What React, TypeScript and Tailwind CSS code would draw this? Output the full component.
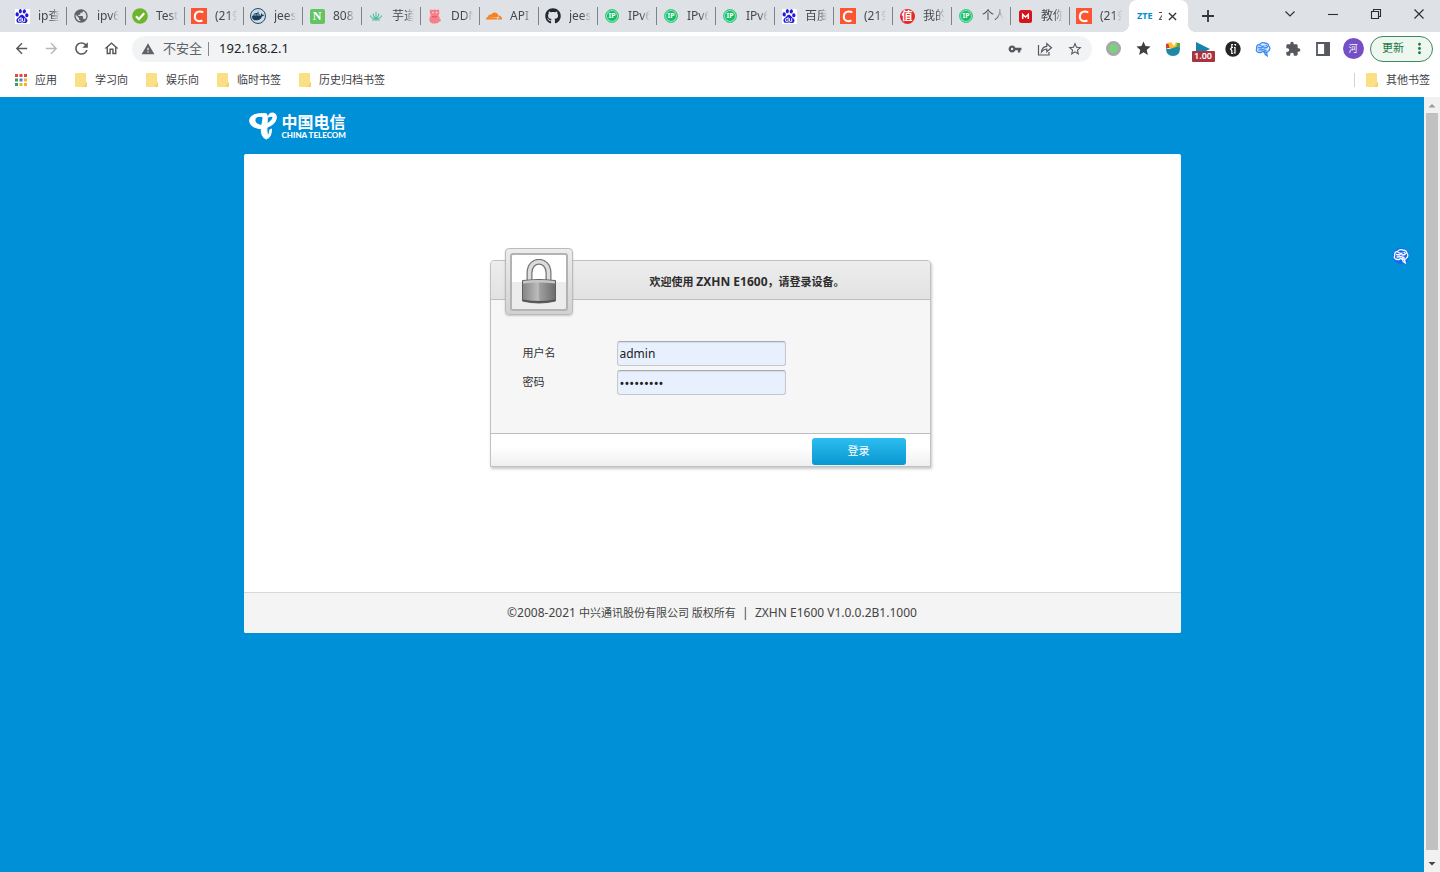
import type { ReactNode } from "react";
import { SiBaidu, SiCloudflare, SiDocker } from "react-icons/si";
import { FaGithub } from "react-icons/fa";
import {
  MdArrowBack,
  MdArrowForward,
  MdExtension,
  MdMoreVert,
  MdPublic,
  MdRefresh,
  MdStar,
  MdStarBorder,
  MdVpnKey,
  MdWarning,
  MdOutlineHome,
} from "react-icons/md";

type TabKind =
  | "baidu" | "globe" | "check" | "csdn" | "docker" | "n" | "lotus"
  | "bear" | "cloud" | "github" | "ip" | "zhi" | "m";

const tabs: { kind: TabKind; title: string }[] = [
  { kind: "baidu", title: "ip查询" },
  { kind: "globe", title: "ipv6" },
  { kind: "check", title: "Test" },
  { kind: "csdn", title: "(21条" },
  { kind: "docker", title: "jees" },
  { kind: "n", title: "808" },
  { kind: "lotus", title: "芋道" },
  { kind: "bear", title: "DDNS" },
  { kind: "cloud", title: "API" },
  { kind: "github", title: "jees" },
  { kind: "ip", title: "IPv6" },
  { kind: "ip", title: "IPv6" },
  { kind: "ip", title: "IPv6" },
  { kind: "baidu", title: "百度" },
  { kind: "csdn", title: "(21条" },
  { kind: "zhi", title: "我的" },
  { kind: "ip", title: "个人" },
  { kind: "m", title: "教你" },
  { kind: "csdn", title: "(21条" },
];

function Favicon({ kind }: { kind: TabKind }) {
  switch (kind) {
    case "baidu":
      return (
        <span className="flex size-[15px] items-center justify-center bg-white">
          <SiBaidu className="size-[14px] text-[#2319dc]" />
        </span>
      );
    case "globe":
      return (
        <span className="flex size-[14px] items-center justify-center rounded-full bg-[#dee1e6]">
          <MdPublic className="size-4 shrink-0 text-[#5f6368]" />
        </span>
      );
    case "check":
      return (
        <svg viewBox="0 0 16 16" className="size-4">
          <circle cx="8" cy="8" r="7.8" fill="#6cb52d" />
          <path d="M4 8.2l2.9 3 5.3-6" fill="none" stroke="#fff" strokeWidth="2.2" />
        </svg>
      );
    case "csdn":
      return (
        <svg viewBox="0 0 16 16" className="size-4">
          <path d="M0 0h16v16H0z" fill="#fc5531" />
          <path d="M12.3 4.3C8.4 2.3 4 3.8 3.8 8.4c-.2 4.2 3.7 5.7 7.6 4.1" fill="none" stroke="#fff" strokeWidth="2" />
        </svg>
      );
    case "docker":
      return (
        <span className="flex size-4 items-center justify-center rounded-full border border-[#274863] bg-[#c9dcea]">
          <SiDocker className="size-3 text-[#1d3d57]" />
        </span>
      );
    case "n":
      return (
        <span className="flex size-[15px] items-center justify-center rounded-[2px] bg-[#62c462] font-['Liberation_Serif',serif] text-[12px] font-bold text-white">
          N
        </span>
      );
    case "lotus":
      return (
        <svg viewBox="0 0 14 14" className="size-[14px]" fill="none" stroke="#55bd9c" strokeWidth="1.1">
          <path d="M7 10V2.8M7 10C5 8.5 4.2 6.5 4 4.5M7 10c2-1.500 2.800-3.500 3-5.500M7 10C4.500 10 2.500 8.700 1 6.500M7 10c2.500 0 4.500-1.300 6-3.500M3 11h8" />
        </svg>
      );
    case "bear":
      return (
        <svg viewBox="0 0 14 16" className="h-4 w-[14px]">
          <path d="M2 1.500l2 .6q3-1 5 0l2-.8.300 4-.7 2.200q1.400 1.700 1 3.500l1.400.8q.3 2-1.700 1.800Q10.500 15.500 7 15.500q-5.500 0-5.600-3.600Q1.300 9 2.800 7.400 1 4.500 2 1.500z" fill="#f77f87" />
          <circle cx="5" cy="4.500" r=".7" fill="#fff" />
          <circle cx="8.500" cy="4.500" r=".7" fill="#fff" />
          <path d="M4 8.500q2.500 1 5 0" stroke="#d9525f" fill="none" />
        </svg>
      );
    case "cloud":
      return <SiCloudflare className="size-4 text-[#f6821f]" />;
    case "github":
      return <FaGithub className="size-4 text-[#24292f]" />;
    case "ip":
      return (
        <span className="flex size-[14px] items-center justify-center rounded-full border border-[#3ecf85] bg-[#12bf67] text-[7px] font-bold text-white ring-1 ring-[#a3dfc1] ring-inset">
          IP
        </span>
      );
    case "zhi":
      return (
        <span className="flex size-[15px] items-center justify-center rounded-full bg-[#e62828] text-[11px] font-bold text-white">
          值
        </span>
      );
    case "m":
      return (
        <svg viewBox="0 0 13 13" className="size-[13px]">
          <rect width="13" height="13" rx="2.500" fill="#d9131c" />
          <path d="M3.700 9V4.500L6.500 7l2.800-2.500V9" fill="none" stroke="#fff" strokeWidth="1.500" />
        </svg>
      );
  }
}

function TabStrip() {
  return (
    <div className="flex h-8 bg-[#dee1e6] pl-2">
      <div role="tablist" className="grid min-w-0 flex-1 auto-cols-fr grid-flow-col">
        {tabs.map((tab, i) => (
          <button
            key={i}
            role="tab"
            aria-selected={false}
            className="flex min-w-0 items-center pl-[6px]"
          >
            <span className="flex w-4 shrink-0 justify-center">
              <Favicon kind={tab.kind} />
            </span>
            <span className="ml-2 w-[22px] overflow-hidden text-left text-[12px] whitespace-nowrap text-[#45494d] [mask-image:linear-gradient(to_right,black_60%,transparent)]">
              {tab.title}
            </span>
            {i < tabs.length - 1 && <span className="ml-auto h-[18px] w-px bg-[#808388]" />}
          </button>
        ))}
        <div className="relative flex min-w-0 items-center rounded-t-lg bg-white">
          <span className="absolute bottom-0 -left-2 size-2 bg-[radial-gradient(circle_at_0_0,transparent_8px,white_8px)]" />
          <span className="absolute -right-2 bottom-0 size-2 bg-[radial-gradient(circle_at_100%_0,transparent_8px,white_8px)]" />
          <button role="tab" aria-selected className="flex items-center pl-2">
            <span className="text-[9px] font-bold text-[#008ed3]">ZTE</span>
            <span className="ml-[6px] w-1 overflow-hidden text-[11px] text-[#45494d]">Z</span>
          </button>
          <button aria-label="关闭标签页" className="ml-auto mr-[11px]">
            <svg viewBox="0 0 10 10" className="size-[9px]" stroke="#33363a" strokeWidth="1.500">
              <path d="M1 1l8 8M9 1L1 9" />
            </svg>
          </button>
        </div>
      </div>
      <div className="flex w-20 items-center pl-[14px]">
        <button aria-label="新标签页">
          <svg viewBox="0 0 12 12" className="size-3" stroke="#33363a" strokeWidth="1.800">
            <path d="M6 0v12M0 6h12" />
          </svg>
        </button>
      </div>
      <WindowButton label="搜索标签页"><path d="M1.500 3.500L6 8l4.500-4.500" /></WindowButton>
      <WindowButton label="最小化"><path d="M1 6.500h10" /></WindowButton>
      <WindowButton label="还原"><path d="M1.500 3.500h7v7h-7zM3.500 3.500v-2h7v7h-2" /></WindowButton>
      <WindowButton label="关闭"><path d="M1.500 1.500l9 9M10.500 1.500l-9 9" /></WindowButton>
    </div>
  );
}

function WindowButton({ label, children }: { label: string; children: ReactNode }) {
  return (
    <button aria-label={label} className="flex h-7 w-[43px] shrink-0 items-center justify-center">
      <svg viewBox="0 0 12 12" className="size-3" fill="none" stroke="#2b2d30" strokeWidth="1.100">
        {children}
      </svg>
    </button>
  );
}

function IconButton({ label, children }: { label: string; children: ReactNode }) {
  return (
    <button aria-label={label} className="flex h-[26px] w-[30px] shrink-0 items-center justify-center text-[#55595e]">
      {children}
    </button>
  );
}

function BrainIcon({ color, bubble }: { color: string; bubble?: string }) {
  return (
    <svg viewBox="0 0 16 16" className="size-4" fill="none" stroke={color} strokeWidth="1.300" strokeLinecap="round">
      <path
        d="M4 11.500C1.500 11.300.800 9 1.800 7.600 1 5 3 3.300 4.600 3.400 6 1.300 9 1.200 10.200 2.300c2-.3 3.600 1 3.500 2.700 1.700 1.400 1.400 4-.2 5-.5 1-1.500 1.300-2 1.300l.700 3.500-2-1.300-.8-2.400-2-.7-1.400 1.100z"
        fill={bubble ?? "#dceafc"}
      />
      <path d="M3.500 6.500l3 .5 2.500-2M5 4.500l2 .700M4 9l4-.300 3 .800M9 7l3-.500M11 4.500l1.500 1M9 11l2.500.200" />
    </svg>
  );
}

function Toolbar() {
  return (
    <div className="flex h-[33px] items-center bg-white pr-[7px] pl-[6px]">
      <IconButton label="后退"><MdArrowBack className="size-[17px]" /></IconButton>
      <IconButton label="前进"><MdArrowForward className="size-[17px] text-[#b5b8bb]" /></IconButton>
      <IconButton label="重新加载"><MdRefresh className="size-[19px]" /></IconButton>
      <IconButton label="主页"><MdOutlineHome className="size-[17px]" /></IconButton>
      <div className="mr-[6px] ml-[6px] flex h-[26px] min-w-0 flex-1 items-center rounded-full bg-[#f1f3f4] pr-[2px] pl-[9px]">
        <button className="flex items-center gap-2 text-[13px] text-[#5f6368]">
          <MdWarning className="size-[14px]" />
          不安全
        </button>
        <span className="mx-[6px] h-[14px] w-px bg-[#85888c]" />
        <input
          aria-label="地址栏"
          defaultValue="192.168.2.1"
          className="ml-1 min-w-0 flex-1 bg-transparent text-[13px] text-[#202124] outline-none"
        />
        <IconButton label="密码"><MdVpnKey className="size-[14px]" /></IconButton>
        <IconButton label="分享">
          <svg viewBox="0 0 16 16" className="size-4" fill="none" stroke="currentColor" strokeWidth="1.200">
            <path d="M1.500 4v10h10.500v-3M4.500 11C4.800 7.500 6.500 5.500 9.800 5.300V2.500l4.700 4.200-4.700 4.100V8C7.500 8 6 9 4.500 11z" />
          </svg>
        </IconButton>
        <IconButton label="收藏"><MdStarBorder className="size-4" /></IconButton>
      </div>
      <IconButton label="状态扩展">
        <span className="size-[15px] rounded-full border-[3px] border-[#a5a8a8] bg-[#7bd27e]" />
      </IconButton>
      <IconButton label="星标扩展"><MdStar className="size-[17px] text-[#3c4043]" /></IconButton>
      <IconButton label="收纳扩展">
        <svg viewBox="0 0 16 16" className="size-4">
          <path d="M1 3l3-1 4 5H1z" fill="#d83b34" />
          <path d="M3 2l3-1 3 4 2-4 4 2-1 5H5z" fill="#fbc02d" />
          <path d="M12 2h3v6h-4z" fill="#59a84b" />
          <path d="M1 7q3 2 7 0t7 0q0 8-7 8T1 7z" fill="#1e88a8" />
        </svg>
      </IconButton>
      <IconButton label="视频倍速">
        <span className="relative flex h-[26px] w-6 justify-center">
          <svg viewBox="0 0 14 14" className="absolute top-[6px] left-[5px] size-[14px]">
            <path d="M0 0l14 7-14 7z" fill="#1583ab" />
          </svg>
          <span className="absolute bottom-0 flex h-[11px] w-[23px] items-center justify-center rounded-[1px] bg-[#a8343f] text-[9px] font-semibold text-white">
            1.00
          </span>
        </span>
      </IconButton>
      <IconButton label="脚本扩展">
        <svg viewBox="0 0 16 16" className="size-4">
          <circle cx="8" cy="8" r="7.700" fill="#242628" />
          <path d="M8 3.500H6.800v3L5.500 8l1.300 1.500v3H8M6.500 6.500H8M9 6.500h1v5.500H8.700M9.300 3.500h1.200v1.200" fill="none" stroke="#fff" strokeWidth="1.200" />
        </svg>
      </IconButton>
      <IconButton label="翻译扩展"><BrainIcon color="#3d8bef" /></IconButton>
      <IconButton label="扩展程序"><MdExtension className="size-4" /></IconButton>
      <IconButton label="侧边栏">
        <svg viewBox="0 0 14 14" className="size-[14px]" fill="none" stroke="currentColor" strokeWidth="1.800">
          <path d="M1 1h12v12H1z" />
          <path d="M9 1h4v12H9z" fill="currentColor" />
        </svg>
      </IconButton>
      <IconButton label="个人资料">
        <span className="flex size-[21px] items-center justify-center rounded-full bg-[#7550c4] text-[9px] text-white">河</span>
      </IconButton>
      <button className="ml-[2px] flex h-[26px] w-[63px] shrink-0 items-center rounded-full border border-[#3c8a5c] bg-[#eef6f0] pl-[11px] text-[11px] text-[#187a43]">
        更新
        <MdMoreVert className="ml-[7px] size-[17px]" />
      </button>
    </div>
  );
}

function Folder() {
  return (
    <svg viewBox="0 0 12 14" className="h-[14px] w-3">
      <path d="M1 0h9q1 0 1 1v8h1v4q0 1-1 1H1q-1 0-1-1V1q0-1 1-1z" fill="#fbdf85" />
      <path d="M9 14q0-3 3-4.500V13q0 1-1 1z" fill="#f5d06c" />
    </svg>
  );
}

const appColors = [
  "#e5483d", "#e5483d", "#e5483d",
  "#34a15a", "#3f82ee", "#f2b32a",
  "#34a15a", "#f2b32a", "#f2b32a",
];

function Bookmarks() {
  return (
    <nav className="flex h-8 items-center gap-[18px] bg-white pr-[10px] pb-[2px] pl-[15px] text-[11px] text-[#3c4043]">
      <a href="#apps" className="flex items-center gap-2">
        <svg viewBox="0 0 12 12" className="size-3">
          {appColors.map((c, i) => (
            <rect key={i} x={(i % 3) * 4.5} y={Math.floor(i / 3) * 4.5} width="3" height="3" fill={c} />
          ))}
        </svg>
        应用
      </a>
      {["学习向", "娱乐向", "临时书签", "历史归档书签"].map((name) => (
        <a key={name} href="#folder" className="flex items-center gap-2">
          <Folder />
          {name}
        </a>
      ))}
      <a href="#other" className="ml-auto flex items-center gap-2">
        <span className="mr-[3px] h-[14px] w-px bg-[#d0d3d6]" />
        <Folder />
        其他书签
      </a>
    </nav>
  );
}

function TelecomLogo() {
  return (
    <div className="flex items-center gap-[5px] text-white">
      <svg viewBox="0 0 82 80" className="h-7 w-7" fill="#fff" stroke="#fff" strokeWidth="3" strokeLinejoin="round">
        <path d="M38 4C18 3 2 12 2 25c1 13 17 23 36 23l3-9C26 37 17 31 17 23c0-8 8-12 18-13z" />
        <path d="M28 12C34 5 45 1 51 5c5 5 2 16 2 27-1 17-3 30 4 39l-6 7C38 72 34 58 37 40c2-12 6-24 3-27-3-3-7-2-12-1z" />
        <path d="M56 14C59 5 66 1 73 3c8 3 9 13 4 22-6 10-22 19-37 22l2-9c12-3 20-9 25-16 4-6 4-9 1-10-4-1-8 0-12 2z" />
        <path d="M55 72c3-5 5-11 6-20l5-3c0 14-5 23-11 27z" />
      </svg>
      <div className="flex flex-col">
        <span className="text-[16px] leading-[18px] font-bold">中国电信</span>
        <span className="font-[Lato,sans-serif] text-[8px] leading-[8px] font-black whitespace-nowrap">CHINA TELECOM</span>
      </div>
    </div>
  );
}

function Padlock() {
  return (
    <svg viewBox="0 0 36 46" className="h-[46px] w-9">
      <defs>
        <linearGradient id="lockBody" x1="0" x2="1">
          <stop offset="0" stopColor="#858585" />
          <stop offset=".48" stopColor="#bdbdbd" />
          <stop offset=".5" stopColor="#a2a2a2" />
          <stop offset="1" stopColor="#6c6c6c" />
        </linearGradient>
      </defs>
      <path d="M8.500 23V14C8.500 -1 27.500 -1 27.500 14v9" fill="none" stroke="#777" strokeWidth="6" />
      <path d="M8.500 23V14C8.500 -1 27.500 -1 27.500 14v9" fill="none" stroke="#dcdcdc" strokeWidth="3.500" />
      <path d="M1.500 21.500q16.500-2 33 0V42q-16.500 4-33 0z" fill="url(#lockBody)" stroke="#606060" />
      <path d="M2 22q16-2 32 0v2.500q-16-2-32 0z" fill="#c7c7c7" />
      <path d="M2 40.500q16 3 32 0V42q-16 4-32 0z" fill="#555" />
    </svg>
  );
}

const fieldClass =
  "h-[25px] w-[169px] rounded-[3px] border border-[#c3c7ce] border-t-[#a6a9ae] bg-[#e8f0fe] px-[2px] text-[#202124] shadow-[inset_0_1px_1px_rgba(0,0,0,0.08)] outline-none";

function LoginForm() {
  return (
    <form
      onSubmit={(e) => e.preventDefault()}
      className="mx-auto w-[441px] rounded-t-[4px] border border-[#c1c1c1] bg-[#f6f6f6] text-[11px] text-[#333] shadow-[1px_2px_3px_rgba(0,0,0,0.22)]"
    >
      <div className="relative flex h-[39px] items-center justify-center rounded-t-[3px] border-b border-[#bebebe] bg-linear-to-b from-[#ededed] to-[#e2e2e2] pt-1 pl-[74px]">
        <div className="absolute -top-[13px] left-[14px] flex h-[67px] w-[68px] items-center justify-center rounded-[4px] border border-[#bbb] bg-linear-to-b from-[#ececec] to-[#d2d2d2] shadow-[0_1px_2px_rgba(0,0,0,0.2)]">
          <div className="flex h-[58px] w-[58px] items-center justify-center rounded-[3px] border-2 border-[#b3b3b3] bg-linear-to-b from-white from-50% to-[#ececec] to-50%">
            <Padlock />
          </div>
        </div>
        <h1 className="font-bold text-[#2c2c2c]">
          欢迎使用 <span className="text-[12px]">ZXHN E1600</span>，请登录设备。
        </h1>
      </div>
      <div className="flex h-[133px] flex-col gap-1 pt-[41px] pl-8">
        <div className="flex items-center">
          <label htmlFor="username" className="w-[94px]">用户名</label>
          <input id="username" defaultValue="admin" className={`${fieldClass} text-[12px]`} />
        </div>
        <div className="flex items-center">
          <label htmlFor="password" className="w-[94px]">密码</label>
          <input id="password" type="password" defaultValue="123456789" className={`${fieldClass} text-[13px]`} />
        </div>
      </div>
      <div className="flex h-[33px] items-center justify-end border-t border-[#bebebe] bg-linear-to-b from-white from-40% to-[#efefef] pt-[2px] pr-6">
        <button className="h-[27px] w-[94px] rounded-[3px] bg-linear-to-b from-[#2bbdf0] to-[#0598d0] text-[11px] text-white">
          登录
        </button>
      </div>
    </form>
  );
}

function Scrollbar() {
  return (
    <div aria-hidden className="flex w-4 shrink-0 flex-col items-center bg-[#f1f1f1]">
      <svg viewBox="0 0 16 16" className="size-4"><path d="M4.500 10.500L8 7l3.500 3.500z" fill="#9a9a9a" /></svg>
      <div className="w-3 flex-1 bg-[#c1c1c1]" />
      <svg viewBox="0 0 16 22" className="h-[22px] w-4"><path d="M4.500 12L8 15.500 11.500 12z" fill="#444" /></svg>
    </div>
  );
}

export default function App() {
  return (
    <div className="flex min-h-screen flex-col font-['Noto_Sans','Noto_Sans_CJK_SC',sans-serif]">
      <header>
        <TabStrip />
        <Toolbar />
        <Bookmarks />
      </header>
      <div className="flex flex-1">
        <main className="relative min-w-0 flex-1 bg-[#0090d7]">
          <div className="mx-auto max-w-[937px]">
            <div className="flex h-[57px] items-center pl-[5px]">
              <TelecomLogo />
            </div>
            <div className="overflow-hidden rounded-[2px] bg-white">
              <div className="pt-[106px] pr-1 pb-[125px]">
                <LoginForm />
              </div>
              <footer className="flex h-[41px] items-center justify-center border-t border-[#d8d8d8] bg-[#f4f4f4] text-[11px] whitespace-pre text-[#444]">
                <span className="text-[12px]">©2008-2021 </span>
                中兴通讯股份有限公司 版权所有
                <span className="text-[12px]">{"  |  ZXHN E1600 V1.0.0.2B1.1000"}</span>
              </footer>
            </div>
          </div>
          <button aria-label="翻译此页" className="absolute top-[151px] right-[15px] flex size-4 items-center justify-center rounded-full bg-[#1467f0]">
            <BrainIcon color="#fff" bubble="#1467f0" />
          </button>
        </main>
        <Scrollbar />
      </div>
    </div>
  );
}
